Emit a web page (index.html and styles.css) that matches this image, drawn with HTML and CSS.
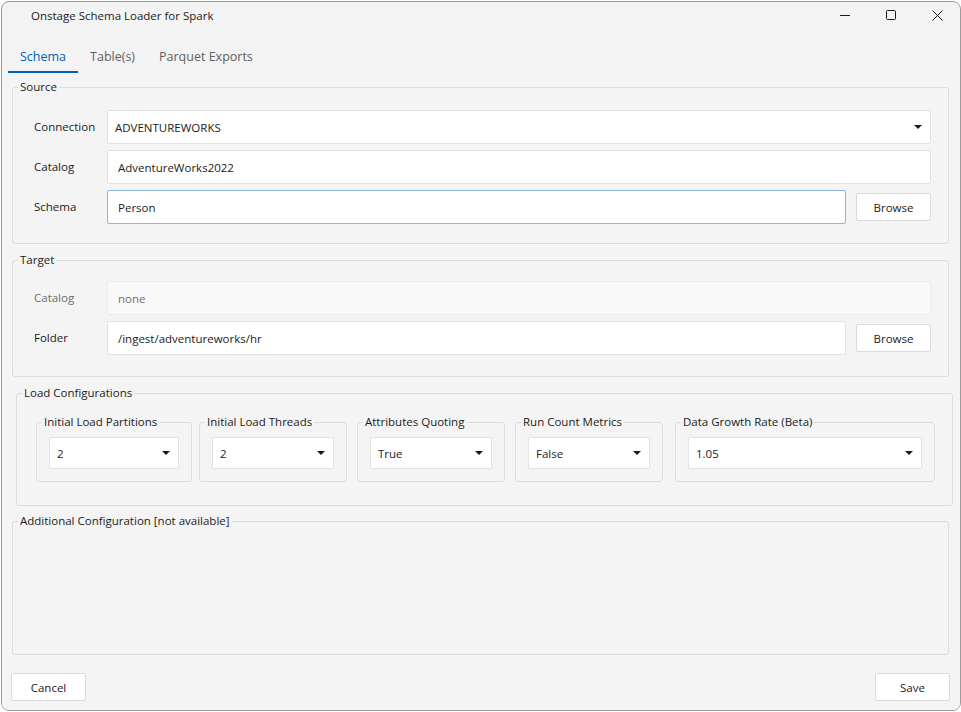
FILE: index.html
```html
<!DOCTYPE html>
<html lang="en">
<head>
  <meta charset="UTF-8">
  <title>Onstage Schema Loader for Spark</title>
  <link rel="stylesheet" href="styles.css">
</head>
<body>
<div class="window">
  <!-- Title bar -->
  <header class="titlebar">
    <span class="title">Onstage Schema Loader for Spark</span>
    <div class="caption-buttons">
      <span class="caption-btn">
        <svg width="10" height="10" viewBox="0 0 10 10"><path d="M0 5.5h10" stroke="#1a1a1a" stroke-width="1"/></svg>
      </span>
      <span class="caption-btn">
        <svg width="10" height="10" viewBox="0 0 10 10"><rect x="0.5" y="0.5" width="9" height="9" rx="1" fill="none" stroke="#1a1a1a" stroke-width="1"/></svg>
      </span>
      <span class="caption-btn">
        <svg width="11" height="11" viewBox="0 0 11 11"><path d="M0.5 0.5l10 10M10.5 0.5l-10 10" stroke="#1a1a1a" stroke-width="1"/></svg>
      </span>
    </div>
  </header>

  <!-- Tabs -->
  <nav class="tabs">
    <span class="tab active">Schema</span>
    <span class="tab">Table(s)</span>
    <span class="tab">Parquet Exports</span>
  </nav>

  <main class="content">
    <!-- Source -->
    <fieldset class="group group-source">
      <legend>Source</legend>
      <div class="group-body">
        <div class="field-row">
          <label>Connection</label>
          <div class="combo"><span>ADVENTUREWORKS</span><i class="arrow"></i></div>
        </div>
        <div class="field-row">
          <label>Catalog</label>
          <div class="textbox">AdventureWorks2022</div>
        </div>
        <div class="field-row">
          <label>Schema</label>
          <div class="textbox focused">Person</div>
          <button class="btn browse">Browse</button>
        </div>
      </div>
    </fieldset>

    <!-- Target -->
    <fieldset class="group group-target">
      <legend>Target</legend>
      <div class="group-body">
        <div class="field-row">
          <label class="disabled">Catalog</label>
          <div class="textbox disabled">none</div>
        </div>
        <div class="field-row">
          <label>Folder</label>
          <div class="textbox">/ingest/adventureworks/hr</div>
          <button class="btn browse">Browse</button>
        </div>
      </div>
    </fieldset>

    <!-- Load configurations -->
    <fieldset class="group group-load">
      <legend>Load Configurations</legend>
      <div class="load-body">
        <fieldset class="group cfg cfg-partitions">
          <legend>Initial Load Partitions</legend>
          <div class="cfg-body"><div class="combo small"><span>2</span><i class="arrow"></i></div></div>
        </fieldset>
        <fieldset class="group cfg cfg-threads">
          <legend>Initial Load Threads</legend>
          <div class="cfg-body"><div class="combo small"><span>2</span><i class="arrow"></i></div></div>
        </fieldset>
        <fieldset class="group cfg cfg-quoting">
          <legend>Attributes Quoting</legend>
          <div class="cfg-body"><div class="combo small"><span>True</span><i class="arrow"></i></div></div>
        </fieldset>
        <fieldset class="group cfg cfg-metrics">
          <legend>Run Count Metrics</legend>
          <div class="cfg-body"><div class="combo small"><span>False</span><i class="arrow"></i></div></div>
        </fieldset>
        <fieldset class="group cfg cfg-growth">
          <legend>Data Growth Rate (Beta)</legend>
          <div class="cfg-body"><div class="combo small"><span>1.05</span><i class="arrow"></i></div></div>
        </fieldset>
      </div>
    </fieldset>

    <!-- Additional configuration -->
    <fieldset class="group group-extra">
      <legend>Additional Configuration [not available]</legend>
    </fieldset>
  </main>

  <footer class="footer">
    <button class="btn">Cancel</button>
    <button class="btn">Save</button>
  </footer>
</div>
</body>
</html>
```

FILE: styles.css
```css
/* Desktop-style dialog window */
body {
  margin: 0;
  background: #ffffff;
  font-family: "Open Sans", "Liberation Sans", sans-serif;
  font-size: 11.5px;
  color: #1b1b1b;
}
.window {
  margin: 1px 0 0 1px;
  width: 960px;
  height: 710px;
  box-sizing: border-box;
  border: 1px solid #9c9c9c;
  border-radius: 8px;
  overflow: hidden;
  background: #f3f3f3;
  display: flex;
  flex-direction: column;
}

/* Title bar */
.titlebar {
  height: 31px;
  display: flex;
  justify-content: space-between;
  align-items: flex-start;
  flex-shrink: 0;
}
.title {
  padding-left: 29px;
  line-height: 28px;
  font-size: 11.5px;
  color: #1a1a1a;
}
.caption-buttons {
  display: flex;
}
.caption-btn {
  width: 46px;
  height: 26px;
  display: flex;
  align-items: center;
  justify-content: center;
}
.caption-btn svg {
  display: block;
}

/* Tabs */
.tabs {
  display: flex;
  margin-left: 6px;
  flex-shrink: 0;
}
.tab {
  height: 40px;
  box-sizing: border-box;
  padding: 15px 12px 0;
  line-height: 18px;
  font-size: 12.5px;
  color: #616161;
  border-bottom: 2px solid transparent;
}
.tab.active {
  color: #005fb8;
  border-bottom-color: #005fb8;
}

/* Content area */
.content {
  flex: 1;
  display: flex;
  flex-direction: column;
  padding: 6px 11px 0 10px;
  background: #f4f4f4;
}
.group {
  margin: 0;
  padding: 0;
  min-width: 0;
  box-sizing: border-box;
  border: 1px solid #dcdcdc;
  border-radius: 3px;
}
.group legend {
  margin-left: 5px;
  padding: 0 2px;
  line-height: 16px;
  color: #1b1b1b;
}
.group-body {
  display: flex;
  flex-direction: column;
  gap: 6px;
  padding: 15px 17px 19px 21px;
}
.group-target {
  margin-top: 8px;
}
.group-target .group-body {
  padding-top: 13px;
  padding-bottom: 21px;
}
.field-row {
  display: flex;
  align-items: center;
  height: 34px;
}
.field-row label {
  width: 73px;
  flex-shrink: 0;
  margin-top: -1px;
}
label.disabled {
  color: #6d6d6d;
}

/* Inputs */
.textbox,
.combo {
  flex: 1;
  height: 34px;
  box-sizing: border-box;
  display: flex;
  align-items: center;
  background: #ffffff;
  border: 1px solid #e2e2e2;
  border-radius: 2px;
}
.textbox {
  padding-left: 10px;
}
.textbox.focused {
  border-color: #8cb6e6;
}
.textbox.disabled {
  background: #f9f9f9;
  border-color: #ebebeb;
  color: #6d6d6d;
}
.combo {
  justify-content: space-between;
  padding: 0 8px 0 7px;
}
.combo.small {
  height: 32px;
}
.arrow {
  width: 0;
  height: 0;
  border-left: 4px solid transparent;
  border-right: 4px solid transparent;
  border-top: 4px solid #1a1a1a;
}

/* Buttons */
.btn {
  width: 75px;
  height: 28px;
  box-sizing: border-box;
  background: #ffffff;
  border: 1px solid #dadada;
  border-radius: 2px;
  font-family: inherit;
  font-size: 11.5px;
  color: #1b1b1b;
  padding: 0;
}
.browse {
  margin-left: 10px;
  flex-shrink: 0;
}

/* Load configurations */
.group-load {
  margin: 8px -4px 0 4px;
}
.load-body {
  display: flex;
  align-items: flex-start;
  padding: 13px 0 23px 19px;
}
.cfg-body {
  display: flex;
  padding: 7px 12px 12px;
}
.cfg-partitions { width: 156px; }
.cfg-threads { width: 148px; margin-left: 7px; }
.cfg-quoting { width: 148px; margin-left: 10px; }
.cfg-metrics { width: 148px; margin-left: 10px; }
.cfg-growth { width: 260px; margin-left: 12px; }

/* Additional configuration */
.group-extra {
  flex: 1;
  margin-top: 7px;
}

/* Footer */
.footer {
  display: flex;
  justify-content: space-between;
  padding: 18px 10px 9px 9px;
  background: #f4f4f4;
  flex-shrink: 0;
}
```
